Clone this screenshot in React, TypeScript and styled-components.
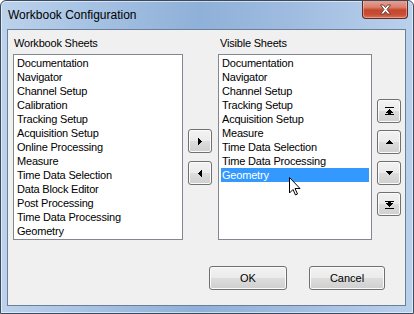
import React from "react";
import styled, { createGlobalStyle } from "styled-components";

const Global = createGlobalStyle`
  html, body { margin: 0; padding: 0; background: #ffffff; }
  body { font-family: "Liberation Sans", Arial, sans-serif; }
  * { box-sizing: border-box; }
`;

const Window = styled.div`
  width: 414px;
  height: 314px;
  border: 1px solid #3b4a5e;
  border-radius: 6px 6px 0 0;
  background: linear-gradient(to right, #bcd2ec 0%, #a6c2e3 22%, #8fb0d8 48%, #a2bee1 74%, #bad1ec 100%);
  box-shadow: inset 0 0 0 1px rgba(255, 255, 255, 0.55);
  display: flex;
  flex-direction: column;
  overflow: hidden;
`;

const TitleBar = styled.div`
  height: 28px;
  flex: 0 0 28px;
  display: flex;
  align-items: flex-start;
  justify-content: space-between;
  padding: 0 5px 0 7px;
`;

const Title = styled.div`
  font-family: "Liberation Sans", Arial, sans-serif;
  font-size: 12px;
  line-height: 14px;
  color: #000;
  margin-top: 7px;
`;

const CloseButton = styled.div`
  width: 46px;
  height: 19px;
  margin-top: -1px;
  border: 1px solid #5e2a22;
  border-top: none;
  border-radius: 0 0 4px 4px;
  background: linear-gradient(to bottom, #e8a597 0%, #d9806f 40%, #c5472f 55%, #c94d33 80%, #d8705a 100%);
  box-shadow: inset 0 0 0 1px rgba(255, 220, 210, 0.45);
  display: flex;
  align-items: center;
  justify-content: center;
`;

const Client = styled.div`
  flex: 1;
  margin: 0 7px 7px 6px;
  border: 1px solid #6d7f96;
  background: #f0f0f0;
  padding: 6px 0 0 5px;
  display: flex;
  flex-direction: column;
  font-family: "Liberation Sans", Arial, sans-serif;
  font-size: 11px;
  letter-spacing: -0.2px;
  color: #000;
`;

const Grid = styled.div`
  display: grid;
  grid-template-columns: 170px 25px 154px 24px;
  grid-template-rows: 14px 186px;
  column-gap: 5px;
  row-gap: 4px;
`;

const Label = styled.div<{ $indent: number; $col: number }>`
  grid-column: ${(p) => p.$col};
  grid-row: 1;
  line-height: 14px;
  padding-left: ${(p) => p.$indent}px;
  white-space: nowrap;
`;

const ListBox = styled.div<{ $col: number }>`
  grid-column: ${(p) => p.$col};
  grid-row: 2;
  position: relative;
  background: #ffffff;
  border: 1px solid #828790;
  padding: 1px;
  display: flex;
  flex-direction: column;
`;

const Item = styled.div<{ $selected?: boolean }>`
  height: 14px;
  line-height: 14px;
  padding-left: 2px;
  margin: 0 ${(p) => (p.$selected ? 1 : 0)}px;
  padding-left: ${(p) => (p.$selected ? 1 : 2)}px;
  background: ${(p) => (p.$selected ? "#3399ff" : "transparent")};
  color: ${(p) => (p.$selected ? "#ffffff" : "#000000")};
  white-space: nowrap;
`;

const ButtonColumn = styled.div<{ $col: number; $top: number; $gap: number }>`
  grid-column: ${(p) => p.$col};
  grid-row: 2;
  display: flex;
  flex-direction: column;
  align-items: flex-start;
  padding-top: ${(p) => p.$top}px;
  gap: ${(p) => p.$gap}px;
`;

const WinButton = styled.div<{ $w: number; $h: number }>`
  width: ${(p) => p.$w}px;
  height: ${(p) => p.$h}px;
  border: 1px solid #707070;
  border-radius: 3px;
  background: linear-gradient(to bottom, #f2f2f2 0%, #ebebeb 50%, #dddddd 50%, #cfcfcf 100%);
  box-shadow: inset 0 0 0 1px #fbfbfb;
  display: flex;
  align-items: center;
  justify-content: center;
  font-size: 11px;
  letter-spacing: 0;
  color: #000;
`;

const Footer = styled.div`
  display: flex;
  justify-content: flex-end;
  gap: 22px;
  margin-top: 26px;
  padding-right: 20px;
`;

const Cursor = styled.svg`
  position: absolute;
  left: 70px;
  top: 122px;
`;

type IconKind = "right" | "left" | "top" | "up" | "down" | "bottom";

const Icon: React.FC<{ kind: IconKind }> = ({ kind }) => {
  switch (kind) {
    case "right":
      return (
        <svg width="4" height="7" viewBox="0 0 4 7" shapeRendering="crispEdges">
          <polygon points="0,0 4,3.5 0,7" fill="#000" />
        </svg>
      );
    case "left":
      return (
        <svg width="4" height="7" viewBox="0 0 4 7" shapeRendering="crispEdges">
          <polygon points="4,0 0,3.5 4,7" fill="#000" />
        </svg>
      );
    case "up":
      return (
        <svg width="7" height="4" viewBox="0 0 7 4" shapeRendering="crispEdges">
          <polygon points="0,4 3.5,0 7,4" fill="#000" />
        </svg>
      );
    case "down":
      return (
        <svg width="7" height="4" viewBox="0 0 7 4" shapeRendering="crispEdges">
          <polygon points="0,0 3.5,4 7,0" fill="#000" />
        </svg>
      );
    case "top":
      return (
        <svg width="9" height="9" viewBox="0 0 9 9" shapeRendering="crispEdges">
          <rect x="0" y="0" width="9" height="1" fill="#000" />
          <polygon points="1,6 4.5,2 8,6" fill="#000" />
          <rect x="0" y="7" width="9" height="1" fill="#000" />
          <rect x="3" y="6" width="3" height="1" fill="#000" />
        </svg>
      );
    case "bottom":
      return (
        <svg width="9" height="9" viewBox="0 0 9 9" shapeRendering="crispEdges">
          <rect x="0" y="1" width="9" height="1" fill="#000" />
          <rect x="3" y="2" width="3" height="1" fill="#000" />
          <polygon points="1,3 4.5,7 8,3" fill="#000" />
          <rect x="0" y="8" width="9" height="1" fill="#000" />
        </svg>
      );
  }
};

const workbookSheets = [
  "Documentation",
  "Navigator",
  "Channel Setup",
  "Calibration",
  "Tracking Setup",
  "Acquisition Setup",
  "Online Processing",
  "Measure",
  "Time Data Selection",
  "Data Block Editor",
  "Post Processing",
  "Time Data Processing",
  "Geometry",
];

const visibleSheets = [
  "Documentation",
  "Navigator",
  "Channel Setup",
  "Tracking Setup",
  "Acquisition Setup",
  "Measure",
  "Time Data Selection",
  "Time Data Processing",
  "Geometry",
];

export default function App() {
  return (
    <>
      <Global />
      <Window>
        <TitleBar>
          <Title>Workbook Configuration</Title>
          <CloseButton>
            <svg width="13" height="11" viewBox="0 0 13 11">
              <path
                d="M1.5 1 L4.5 1 L6.5 3.5 L8.5 1 L11.5 1 L8 5.5 L11.5 10 L8.5 10 L6.5 7.5 L4.5 10 L1.5 10 L5 5.5 Z"
                fill="#ffffff"
                stroke="#5a3a36"
                strokeWidth="0.9"
                strokeLinejoin="round"
              />
            </svg>
          </CloseButton>
        </TitleBar>
        <Client>
          <Grid>
            <Label $col={1} $indent={1}>Workbook Sheets</Label>
            <Label $col={3} $indent={2}>Visible Sheets</Label>
            <ListBox $col={1}>
              {workbookSheets.map((s) => (
                <Item key={s}>{s}</Item>
              ))}
            </ListBox>
            <ButtonColumn $col={2} $top={75} $gap={8}>
              <WinButton $w={24} $h={24}>
                <Icon kind="right" />
              </WinButton>
              <WinButton $w={24} $h={24}>
                <Icon kind="left" />
              </WinButton>
            </ButtonColumn>
            <ListBox $col={3}>
              {visibleSheets.map((s) => (
                <Item key={s} $selected={s === "Geometry"}>
                  {s}
                </Item>
              ))}
              <Cursor width="12" height="19" viewBox="0 0 12 19">
                <path
                  d="M0.5 0.5 L0.5 16 L4 12.5 L6.5 18 L8.5 17 L6 11.5 L11 11.5 Z"
                  fill="#ffffff"
                  stroke="#000000"
                  strokeWidth="1"
                  strokeLinejoin="miter"
                />
              </Cursor>
            </ListBox>
            <ButtonColumn $col={4} $top={45} $gap={7}>
              <WinButton $w={24} $h={24}>
                <Icon kind="top" />
              </WinButton>
              <WinButton $w={24} $h={24}>
                <Icon kind="up" />
              </WinButton>
              <WinButton $w={24} $h={24}>
                <Icon kind="down" />
              </WinButton>
              <WinButton $w={24} $h={24}>
                <Icon kind="bottom" />
              </WinButton>
            </ButtonColumn>
          </Grid>
          <Footer>
            <WinButton $w={78} $h={24}>OK</WinButton>
            <WinButton $w={76} $h={24}>Cancel</WinButton>
          </Footer>
        </Client>
      </Window>
    </>
  );
}
